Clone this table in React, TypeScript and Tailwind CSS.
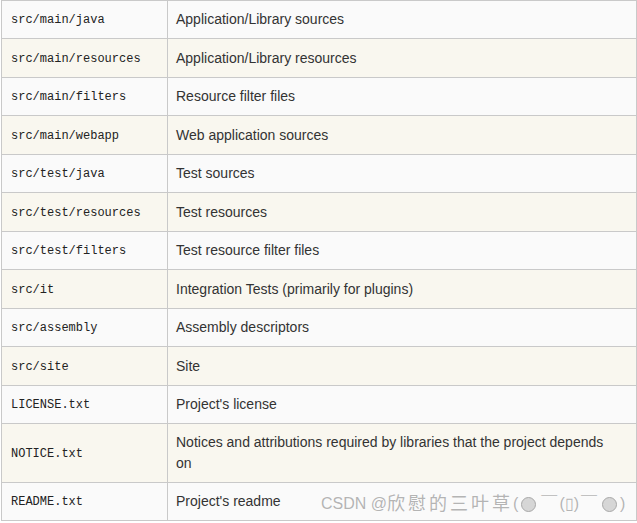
const rows: { path: string; desc: string; h: string }[] = [
  { path: 'src/main/java', desc: 'Application/Library sources', h: 'h-[38px]' },
  { path: 'src/main/resources', desc: 'Application/Library resources', h: 'h-[39px]' },
  { path: 'src/main/filters', desc: 'Resource filter files', h: 'h-[38px]' },
  { path: 'src/main/webapp', desc: 'Web application sources', h: 'h-[39px]' },
  { path: 'src/test/java', desc: 'Test sources', h: 'h-[38px]' },
  { path: 'src/test/resources', desc: 'Test resources', h: 'h-[39px]' },
  { path: 'src/test/filters', desc: 'Test resource filter files', h: 'h-[38px]' },
  { path: 'src/it', desc: 'Integration Tests (primarily for plugins)', h: 'h-[39px]' },
  { path: 'src/assembly', desc: 'Assembly descriptors', h: 'h-[38px]' },
  { path: 'src/site', desc: 'Site', h: 'h-[39px]' },
  { path: 'LICENSE.txt', desc: "Project's license", h: 'h-[38px]' },
  {
    path: 'NOTICE.txt',
    desc: 'Notices and attributions required by libraries that the project depends on',
    h: 'h-[59px]',
  },
  { path: 'README.txt', desc: "Project's readme", h: 'h-[37px]' },
];

// grey "emoji" circle used in the watermark
const Dot = () => (
  <span className="inline-block w-[15px] h-[15px] rounded-full bg-[#d6d6d6] border border-[#a8a8a8] align-[-2px] mx-[3px]" />
);

const App = () => {
  return (
    <div className="relative w-[637px] h-[523px] bg-white">
      <div className="ml-[1px] w-[636px] border border-[#c9c9c9] font-['Liberation_Sans',Arial,sans-serif] text-[14px] leading-[21px] text-[#333]">
        {rows.map((row, index) => (
          <div
            key={index}
            className={`flex ${row.h} ${index < rows.length - 1 ? 'border-b border-[#c9c9c9]' : ''} ${
              index % 2 === 1 ? 'bg-[#f9f7ef]' : 'bg-[#fafafa]'
            }`}
          >
            <div className="w-[166px] shrink-0 border-r border-[#c9c9c9] flex items-center pl-[9px] pt-[2px] font-['Liberation_Mono',monospace] text-[12px] text-[#222]">
              {row.path}
            </div>
            <div className="flex-1 flex items-center pl-[8px] pr-[20px]">{row.desc}</div>
          </div>
        ))}
      </div>

      {/* CSDN watermark */}
      <div className="absolute left-[321px] top-[493px] flex items-center font-['Liberation_Sans','Noto_Sans_CJK_SC',sans-serif] text-[16px] leading-[22px] text-[#b4b4b4] [text-shadow:0_0_1px_#fff,0_0_2px_#fff] whitespace-nowrap">
        <span>CSDN @</span>
        <span className="text-[18px] tracking-[3px]">欣慰的三叶草</span>
        <span>(</span>
        <Dot />
        <span className="mx-[2px]">￣</span>
        <span>(▯)</span>
        <span className="mx-[2px]">￣</span>
        <Dot />
        <span>)</span>
      </div>
    </div>
  );
};

export default App;
